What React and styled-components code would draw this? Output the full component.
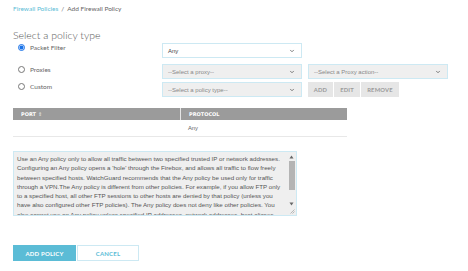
import React from 'react';
import styled, { createGlobalStyle } from 'styled-components';
import { ChevronDown } from 'lucide-react';

const GlobalStyle = createGlobalStyle`
  html, body { margin: 0; padding: 0; background: #fff; }
  body { font-family: Lato, "Open Sans", sans-serif; color: #555; }
  * { box-sizing: border-box; }
`;

const Page = styled.div`
  width: 468px; height: 271px; padding: 0 13px; overflow: hidden;
`;

const Crumbs = styled.div`
  display: flex; gap: 3px; padding-top: 4px; height: 13px;
  font-size: 6.5px; line-height: 9px; color: #666;
`;
const CrumbLink = styled.span` color: #5bbcd6; `;

const Title = styled.h2`
  margin: 16px 0 0; font-size: 10.5px; line-height: 13px; font-weight: 300; color: #555;
`;

const Row = styled.div`
  display: grid; grid-template-columns: 143px 140px 140px; column-gap: 6px;
  height: 15px; margin-top: ${p => p.$gap}px;
`;

const RadioLabel = styled.label`
  display: flex; align-items: center; gap: 5px; padding-left: 5px;
  height: 9px; margin-top: ${p => p.$shift || 0}px;
  font-size: 6.5px; color: #666;
`;

const RadioDot = styled.span`
  width: 7px; height: 7px; border-radius: 50%; flex: none;
  border: 1px solid ${p => (p.$on ? '#1a73e8' : '#777')};
  background: ${p => (p.$on ? 'radial-gradient(circle, #1a73e8 0 1.6px, #cfe0fb 2.2px)' : '#fff')};
`;

const SelectBox = styled.div`
  display: flex; align-items: center; justify-content: space-between;
  height: 15px; padding: 0 6px 0 5px;
  border: 1px solid #cde9f3;
  background: ${p => (p.$disabled ? '#efefef' : '#fff')};
  color: ${p => (p.$disabled ? '#888' : '#444')};
  font-family: "Liberation Sans", Arial, sans-serif; font-size: 6px;
  svg { color: #555; }
`;

const Spacer = styled.div``;

const ButtonGroup = styled.div` display: flex; `;
const SmallBtn = styled.button`
  width: ${p => p.$w}px; height: 15px; padding: 0; border: none;
  border-right: 1px solid #fff; background: #e6e6e6; color: #9a9a9a;
  font-family: Lato, sans-serif; font-weight: 700; font-size: 5.8px; letter-spacing: 0.2px;
`;

const Table = styled.div` width: 334px; margin-top: 11px; `;
const HeadRow = styled.div`
  display: grid; grid-template-columns: 167px 167px; height: 12px; background: #9b9b9b;
`;
const HeadCell = styled.div`
  display: flex; align-items: center; gap: 2px; padding-left: 8px;
  color: #fff; font-family: "DejaVu Sans", Verdana, sans-serif; font-weight: 700; font-size: 5px;
  & + & { border-left: 1px solid #e6e6e6; }
`;
const SortIcon = styled.span` font-size: 5px; color: #ddd; `;
const BodyRow = styled.div`
  display: grid; grid-template-columns: 167px 167px; height: 17px;
  border-bottom: 1px solid #e8e8e8;
`;
const Cell = styled.div`
  display: flex; align-items: center; padding-left: 8px;
  font-family: "Liberation Sans", Arial, sans-serif; font-size: 5.8px; color: #666;
`;

const DescBox = styled.div`
  display: flex; width: 284px; height: 65px; margin-top: 14px;
  border: 1px solid #cde9f3; background: #efefef;
`;
const Description = styled.textarea`
  flex: 1; min-width: 0; height: 100%; margin: 0;
  padding: 2px 0 0 3px; resize: none; overflow: hidden;
  border: none; outline: none; background: transparent; color: #555;
  font-family: "Liberation Sans", Arial, sans-serif; font-size: 6.2px; line-height: 9.3px;
`;
const Rail = styled.div`
  width: 9px; flex: none; display: flex; flex-direction: column; align-items: center;
  padding: 3px 0 1px;
`;
const RailArrow = styled.svg` width: 5px; height: 4px; flex: none; fill: #666; `;
const Thumb = styled.div`
  width: 6px; height: 29px; margin: 2px 0 0; background: #b4b4b4; flex: none;
`;
const RailFill = styled.div` flex: 1; `;
const Grip = styled.svg` width: 5px; height: 5px; margin: 3px 0 0 2px; flex: none; stroke: #aaa; `;

const Actions = styled.div` display: flex; gap: 1px; margin-top: 29px; `;
const PrimaryBtn = styled.button`
  width: 63px; height: 16px; border: 1px solid #5bbcd6; background: #5bbcd6; color: #fff;
  font-family: Lato, sans-serif; font-weight: 700; font-size: 6px; letter-spacing: 0.2px;
`;
const GhostBtn = styled(PrimaryBtn)`
  width: 62px; background: #fff; border-color: #cde9f3; color: #5bbcd6;
`;

const text = `Use an Any policy only to allow all traffic between two specified trusted IP or network addresses. Configuring an Any policy opens a 'hole' through the Firebox, and allows all traffic to flow freely between specified hosts. WatchGuard recommends that the Any policy be used only for traffic through a VPN.The Any policy is different from other policies. For example, if you allow FTP only to a specified host, all other FTP sessions to other hosts are denied by that policy (unless you have also configured other FTP policies). The Any policy does not deny like other policies. You also cannot use an Any policy unless specified IP addresses, network addresses, host aliases, group names, or user names are used in the From or To lists. If not, the Any policy does not work.`;

const Select = ({ children, disabled }) => (
  <SelectBox $disabled={disabled}>
    <span>{children}</span>
    <ChevronDown size={6} strokeWidth={3} />
  </SelectBox>
);

export default function App() {
  return (
    <Page>
      <GlobalStyle />
      <Crumbs>
        <CrumbLink>Firewall Policies</CrumbLink>
        <span>/</span>
        <span>Add Firewall Policy</span>
      </Crumbs>
      <Title>Select a policy type</Title>
      <Row $gap={1}>
        <RadioLabel><RadioDot $on />Packet Filter</RadioLabel>
        <Select>Any</Select>
        <Spacer />
      </Row>
      <Row $gap={6}>
        <RadioLabel $shift={1}><RadioDot />Proxies</RadioLabel>
        <Select disabled>--Select a proxy--</Select>
        <Select disabled>--Select a Proxy action--</Select>
      </Row>
      <Row $gap={3}>
        <RadioLabel><RadioDot />Custom</RadioLabel>
        <Select disabled>--Select a policy type--</Select>
        <ButtonGroup>
          <SmallBtn $w={26}>ADD</SmallBtn>
          <SmallBtn $w={27}>EDIT</SmallBtn>
          <SmallBtn $w={39}>REMOVE</SmallBtn>
        </ButtonGroup>
      </Row>
      <Table>
        <HeadRow>
          <HeadCell>PORT <SortIcon>⇕</SortIcon></HeadCell>
          <HeadCell>PROTOCOL</HeadCell>
        </HeadRow>
        <BodyRow>
          <Cell />
          <Cell>Any</Cell>
        </BodyRow>
      </Table>
      <DescBox>
        <Description readOnly value={text} />
        <Rail>
          <RailArrow viewBox="0 0 5 4"><path d="M2.5 0.5 L4.5 3.5 L0.5 3.5 Z" /></RailArrow>
          <Thumb />
          <RailFill />
          <RailArrow viewBox="0 0 5 4"><path d="M0.5 0.5 L4.5 0.5 L2.5 3.5 Z" /></RailArrow>
          <Grip viewBox="0 0 5 5"><path d="M4.5 0.5 L0.5 4.5 M4.5 2.5 L2.5 4.5" strokeWidth="0.8" /></Grip>
        </Rail>
      </DescBox>
      <Actions>
        <PrimaryBtn>ADD POLICY</PrimaryBtn>
        <GhostBtn>CANCEL</GhostBtn>
      </Actions>
    </Page>
  );
}
